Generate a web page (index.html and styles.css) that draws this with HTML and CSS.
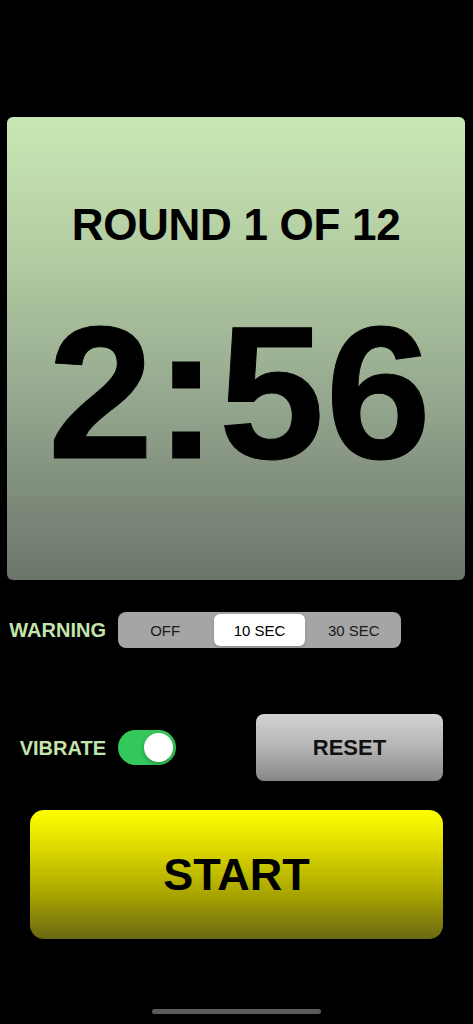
FILE: index.html
```html
<!DOCTYPE html>
<html lang="en">
<head>
<meta charset="utf-8">
<title>Round Timer</title>
<link rel="stylesheet" href="styles.css">
</head>
<body>
<main class="screen">
  <section class="clock">
    <div class="round">ROUND 1 OF 12</div>
    <div class="time">2:56</div>
  </section>

  <div class="row warning-row">
    <span class="label">WARNING</span>
    <div class="segmented">
      <span class="seg">OFF</span>
      <span class="seg seg-on">10 SEC</span>
      <span class="seg">30 SEC</span>
    </div>
  </div>

  <div class="row vibrate-row">
    <span class="label">VIBRATE</span>
    <span class="switch"><span class="knob"></span></span>
    <button class="btn-reset">RESET</button>
  </div>

  <button class="btn-start">START</button>

  <div class="home-bar"></div>
</main>
</body>
</html>
```

FILE: styles.css
```css
html, body {
  margin: 0;
  padding: 0;
  background: #000;
}

body {
  font-family: "Liberation Sans", Arial, Helvetica, sans-serif;
  color: #000;
}

.screen {
  width: 473px;
  height: 1024px;
  display: flex;
  flex-direction: column;
  overflow: hidden;
}

/* Main clock panel */
.clock {
  margin: 117px 0 0 7px;
  width: 458px;
  height: 463px;
  box-sizing: border-box;
  border-radius: 6px;
  background: linear-gradient(180deg, #c9e7b5 0%, #b3cca2 30%, #94a68e 62%, #6b756b 100%);
  display: flex;
  flex-direction: column;
  align-items: center;
  padding-top: 86px;
}

.round {
  font-weight: 700;
  font-size: 44px;
  line-height: 44px;
  letter-spacing: -0.3px;
}

.time {
  margin-top: 50px;
  padding-left: 8px;
  font-weight: 700;
  font-size: 190px;
  line-height: 190px;
  letter-spacing: 1px;
  -webkit-text-stroke: 1px #000;
}

/* Label + control rows */
.row {
  display: grid;
  grid-template-columns: 106px auto 1fr;
  align-items: center;
  column-gap: 12px;
}

.label {
  justify-self: end;
  color: #c5e4ad;
  font-weight: 700;
  font-size: 20px;
  line-height: 20px;
}

.warning-row {
  margin-top: 32px;
  height: 36px;
}

.segmented {
  width: 283px;
  height: 36px;
  box-sizing: border-box;
  padding: 2px;
  border-radius: 8px;
  background: #a5a5a5;
  display: grid;
  grid-template-columns: repeat(3, 1fr);
  column-gap: 4px;
}

.seg {
  display: flex;
  align-items: center;
  justify-content: center;
  font-size: 15px;
  color: #1a1a1a;
  border-radius: 6px;
}

.seg-on {
  background: #fff;
  color: #000;
  box-shadow: 0 2px 3px rgba(0, 0, 0, 0.12);
}

.vibrate-row {
  margin-top: 66px;
  height: 67px;
}

.switch {
  width: 58px;
  height: 35px;
  box-sizing: border-box;
  border-radius: 18px;
  background: #34c759;
  padding: 3px;
  display: flex;
  justify-content: flex-end;
}

.knob {
  width: 29px;
  height: 29px;
  border-radius: 50%;
  background: #fff;
  box-shadow: 0 2px 4px rgba(0, 0, 0, 0.25);
}

.btn-reset {
  justify-self: end;
  margin-right: 30px;
  width: 187px;
  height: 67px;
  border: 0;
  border-radius: 8px;
  background: linear-gradient(180deg, #d3d3d3 0%, #b4b4b4 50%, #878787 100%);
  font-family: inherit;
  font-weight: 700;
  font-size: 22px;
  color: #111;
  padding: 0;
}

.btn-start {
  margin: 29px 0 0 30px;
  width: 413px;
  height: 129px;
  border: 0;
  border-radius: 14px;
  background: linear-gradient(180deg, #ffff00 0%, #dcd800 30%, #a9a500 65%, #6a6814 100%);
  font-family: inherit;
  font-weight: 700;
  font-size: 45px;
  color: #000;
  padding: 0;
}

.home-bar {
  margin: 70px 0 0 152px;
  width: 169px;
  height: 5px;
  border-radius: 3px;
  background: #5c5c5c;
}
```
